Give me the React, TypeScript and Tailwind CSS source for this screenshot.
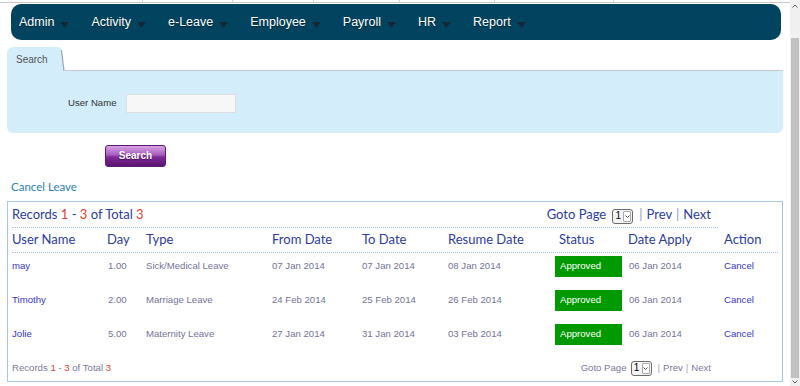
import React from "react";

const navItems = ["Admin", "Activity", "e-Leave", "Employee", "Payroll", "HR", "Report"];

const rows = [
  { name: "may", day: "1.00", type: "Sick/Medical Leave", from: "07 Jan 2014", to: "07 Jan 2014", resume: "08 Jan 2014", apply: "06 Jan 2014" },
  { name: "Timothy", day: "2.00", type: "Marriage Leave", from: "24 Feb 2014", to: "25 Feb 2014", resume: "26 Feb 2014", apply: "06 Jan 2014" },
  { name: "Jolie", day: "5.00", type: "Maternity Leave", from: "27 Jan 2014", to: "31 Jan 2014", resume: "03 Feb 2014", apply: "06 Jan 2014" },
];

const cols = "grid grid-cols-[95px_39px_126px_90px_86px_107px_73px_96px_1fr]";

function Arrow() {
  return (
    <svg width="9" height="6" viewBox="0 0 9 6" className="ml-[6px] mt-[4px]">
      <path d="M0 0 L9 0 L4.5 6 Z" fill="#142836" />
    </svg>
  );
}

function SelectBox() {
  return (
    <span className="inline-flex items-center h-[15px] w-[21px] border border-[#6b6b6b] rounded-[3px] bg-[#f4f4f4]">
      <span className="flex-1 text-center text-[10px] leading-none text-black font-['Liberation_Sans',sans-serif]">1</span>
      <span className="w-[8px] h-[11px] mr-[1px] border border-[#aaa] rounded-[1px] bg-white flex items-center justify-center">
        <svg width="5" height="3" viewBox="0 0 5 3"><path d="M0.5 0.5 L2.5 2.5 L4.5 0.5" stroke="#444" fill="none" strokeWidth="1" /></svg>
      </span>
    </span>
  );
}

export default function App() {
  return (
    <div className="flex w-[800px] h-[386px] overflow-hidden bg-white font-['Liberation_Sans',Arial,sans-serif]">
      <div className="w-[790px] h-[386px] flex flex-col">
        {/* top strip */}
        <div className="h-[3px] flex border-b border-[#c9c9c9] shrink-0">
          <div className="w-[143px] border-r border-[#d6d6d6]" />
          <div className="w-[90px] border-r border-[#d6d6d6]" />
          <div className="w-[81px] border-r border-[#d6d6d6]" />
          <div className="w-[86px] border-r border-[#d6d6d6]" />
          <div className="w-[95px] border-r border-[#d6d6d6]" />
          <div className="w-[119px] border-r border-[#d6d6d6]" />
          <div className="flex-1" />
        </div>
        {/* nav */}
        <div className="ml-[11px] mr-[9px] mt-[1px] h-[36px] rounded-[10px] bg-[#02445f] flex items-center shrink-0">
          {navItems.map((n) => (
            <div key={n} className="flex items-center pl-[8px] pr-[14px] mt-[1px]">
              <span className="text-white text-[12.5px] [text-shadow:0_1px_1px_rgba(0,0,0,0.5)]">{n}</span>
              <Arrow />
            </div>
          ))}
        </div>

        {/* search tab */}
        <div className="ml-[7px] mt-[7px] flex items-end h-[24px] shrink-0">
          <div className="relative w-[58px] h-[24px]">
            <svg width="58" height="24" viewBox="0 0 58 24" className="absolute inset-0">
              <path d="M0 24 L0 7 Q0 0 7 0 L51 0 Q54 0 54.5 3 L57 24 Z" fill="#d3edfa" />
              <path d="M54.5 3 L57 24" stroke="#9aa4aa" strokeWidth="1.2" fill="none" />
            </svg>
            <span className="absolute left-[9px] top-[8px] text-[10px] leading-none text-[#555]">Search</span>
          </div>
          <div className="flex-1 h-[24px] border-b border-[#c4c8cc] mr-[7px]" />
        </div>
        <div className="ml-[7px] w-[776px] h-[62px] bg-[#d3edfa] rounded-b-[6px] flex items-center shrink-0">
          <span className="ml-[61px] text-[9.6px] text-[#333] mt-[2px]">User Name</span>
          <div className="ml-[9px] mt-[2px] w-[110px] h-[19px] bg-[#f7f7f7] border border-[#dedede]" />
        </div>

        {/* button */}
        <div className="mt-[9px] ml-[105px] shrink-0 h-[23px]">
          <button className="w-[61px] h-[22px] rounded-[3px] bg-[linear-gradient(to_bottom,#d7a3e6_0%,#a75bbd_45%,#7d2a94_55%,#5e1472_100%)] text-white text-[10px] font-bold border border-[#5c1a70] [text-shadow:0_1px_1px_rgba(0,0,0,0.4)]">
            Search
          </button>
        </div>

        {/* cancel leave */}
        <div className="ml-[11px] mt-[14px] h-[16px] text-[11.5px] leading-[16px] text-[#2c7fb0] font-['Lato',sans-serif] shrink-0">
          Cancel Leave
        </div>

        {/* table box */}
        <div className="ml-[7px] mt-[6px] w-[776px] h-[181px] border border-[#a8c6df] shrink-0 font-['Lato',sans-serif]">
          <div className="ml-[4px] w-[706px] h-[26px] pt-[1px] border-b border-dotted border-[#9fc0d6] flex items-center justify-between pr-[7px] text-[13px] text-[#2b3c9c]">
            <span>
              Records <span className="text-[#e53a2e]">1</span> - <span className="text-[#e53a2e]">3</span> of Total{" "}
              <span className="text-[#e53a2e]">3</span>
            </span>
            <span className="flex items-center">
              <span>Goto Page</span>
              <span className="ml-[6px]"><SelectBox /></span>
              <span className="ml-[6px] text-[#8d97c8]">|</span>
              <span className="ml-[4px]">Prev</span>
              <span className="ml-[4px] text-[#8d97c8]">|</span>
              <span className="ml-[4px]">Next</span>
            </span>
          </div>
          <div className={cols + " ml-[4px] mr-[4px] h-[25px] items-center border-b border-dotted border-[#9fc0d6] text-[13px] text-[#2b3c9c]"}>
            <span>User Name</span>
            <span>Day</span>
            <span>Type</span>
            <span>From Date</span>
            <span>To Date</span>
            <span>Resume Date</span>
            <span className="pl-[4px]">Status</span>
            <span>Date Apply</span>
            <span>Action</span>
          </div>
          {rows.map((r) => (
            <div key={r.name} className={cols + " ml-[4px] mr-[4px] h-[34px] pt-[3px] font-['Liberation_Sans',sans-serif] text-[9.6px] text-[#73739a]"}>
              <span className="h-[21px] flex items-center text-[#3535cc]">{r.name}</span>
              <span className="h-[21px] flex items-center pl-[1px]">{r.day}</span>
              <span className="h-[21px] flex items-center">{r.type}</span>
              <span className="h-[21px] flex items-center">{r.from}</span>
              <span className="h-[21px] flex items-center">{r.to}</span>
              <span className="h-[21px] flex items-center">{r.resume}</span>
              <span className="h-[21px] w-[67px] flex items-center bg-[#009a00] text-white pl-[5px]">Approved</span>
              <span className="h-[21px] flex items-center pl-[1px]">{r.apply}</span>
              <span className="h-[21px] flex items-center text-[#3535cc]">Cancel</span>
            </div>
          ))}
          <div className="ml-[4px] w-[706px] h-[26px] flex items-center justify-between pr-[7px] font-['Liberation_Sans',sans-serif] text-[9.6px] text-[#7a7a9a]">
            <span>
              Records <span className="text-[#e53a2e]">1</span> - <span className="text-[#e53a2e]">3</span> of Total{" "}
              <span className="text-[#e53a2e]">3</span>
            </span>
            <span className="flex items-center">
              <span>Goto Page</span>
              <span className="ml-[4px]"><SelectBox /></span>
              <span className="ml-[6px] text-[#a0a0c0]">|</span>
              <span className="ml-[3px]">Prev</span>
              <span className="ml-[3px] text-[#a0a0c0]">|</span>
              <span className="ml-[3px]">Next</span>
            </span>
          </div>
        </div>
      </div>

      {/* scrollbar */}
      <div className="w-[10px] h-[386px] bg-[#f0f0f0] flex flex-col items-center">
        <div className="h-[12px] flex items-center justify-center">
          <svg width="6" height="4" viewBox="0 0 6 4"><path d="M0.5 3.5 L3 1 L5.5 3.5" stroke="#606060" fill="none" /></svg>
        </div>
        <div className="mt-[26px] w-[8px] flex-1 bg-[#c1c1c1]" />
        <div className="h-[8px] flex items-center justify-center">
          <svg width="6" height="4" viewBox="0 0 6 4"><path d="M0.5 0.5 L3 3 L5.5 0.5" stroke="#606060" fill="none" /></svg>
        </div>
      </div>
    </div>
  );
}
